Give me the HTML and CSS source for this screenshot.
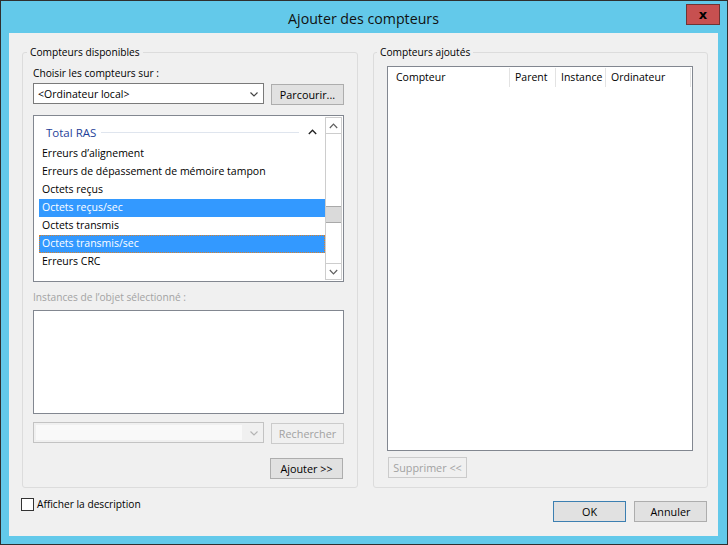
FILE: index.html
```html
<!DOCTYPE html>
<html lang="fr">
<head>
<meta charset="utf-8">
<title>Ajouter des compteurs</title>
<link rel="stylesheet" href="styles.css">
</head>
<body>
<div class="window">
  <div class="titlebar">
    <div class="title">Ajouter des compteurs</div>
    <button class="close" type="button">x</button>
  </div>
  <div class="client">
    <div class="groups">
      <fieldset class="group group-left">
        <legend>Compteurs disponibles</legend>
        <div class="label">Choisir les compteurs sur :</div>
        <div class="row">
          <div class="combo">
            <span class="combo-text">&lt;Ordinateur local&gt;</span>
            <svg class="chev" width="8" height="5" viewBox="0 0 8 5"><polyline points="0.5,0.5 4,4 7.5,0.5" fill="none" stroke="#444" stroke-width="1.2"/></svg>
          </div>
          <button class="btn btn-offset" type="button">Parcourir...</button>
        </div>
        <div class="listbox">
          <div class="items">
            <div class="cat">
              <span class="cat-name">Total RAS</span>
              <span class="cat-line"></span>
              <svg class="cat-chev" width="9" height="6" viewBox="0 0 9 6"><polyline points="0.8,5 4.5,1.2 8.2,5" fill="none" stroke="#222" stroke-width="1.3"/></svg>
            </div>
            <div class="item">Erreurs d’alignement</div>
            <div class="item">Erreurs de dépassement de mémoire tampon</div>
            <div class="item">Octets reçus</div>
            <div class="item sel">Octets reçus/sec</div>
            <div class="item">Octets transmis</div>
            <div class="item sel focus">Octets transmis/sec</div>
            <div class="item">Erreurs CRC</div>
          </div>
          <div class="scrollbar">
            <div class="sb-btn sb-up"><svg width="9" height="6" viewBox="0 0 9 6"><polyline points="0.8,5 4.5,1.2 8.2,5" fill="none" stroke="#606060" stroke-width="1.2"/></svg></div>
            <div class="sb-track"><div class="sb-thumb"></div></div>
            <div class="sb-btn sb-down"><svg width="9" height="6" viewBox="0 0 9 6"><polyline points="0.8,1 4.5,4.8 8.2,1" fill="none" stroke="#606060" stroke-width="1.2"/></svg></div>
          </div>
        </div>
        <div class="label label-disabled">Instances de l’objet sélectionné :</div>
        <div class="instances"></div>
        <div class="row row-search">
          <div class="combo combo-disabled">
            <span class="combo-inner"></span>
            <svg class="chev" width="8" height="5" viewBox="0 0 8 5"><polyline points="0.5,0.5 4,4 7.5,0.5" fill="none" stroke="#b4b4b4" stroke-width="1.2"/></svg>
          </div>
          <button class="btn btn-disabled btn-offset" type="button">Rechercher</button>
        </div>
        <div class="row row-add">
          <button class="btn" type="button">Ajouter &gt;&gt;</button>
        </div>
      </fieldset>
      <fieldset class="group group-right">
        <legend>Compteurs ajoutés</legend>
        <div class="listview">
          <div class="lv-header">
            <div class="lv-col col-1">Compteur</div>
            <div class="lv-col col-2">Parent</div>
            <div class="lv-col col-3">Instance</div>
            <div class="lv-col col-4">Ordinateur</div>
          </div>
        </div>
        <div class="row row-remove">
          <button class="btn btn-disabled btn-remove" type="button">Supprimer &lt;&lt;</button>
        </div>
      </fieldset>
    </div>
    <div class="footer">
      <label class="check">
        <span class="box"></span>
        <span class="check-label">Afficher la description</span>
      </label>
      <div class="actions">
        <button class="btn btn-default" type="button">OK</button>
        <button class="btn" type="button">Annuler</button>
      </div>
    </div>
  </div>
</div>
</body>
</html>
```

FILE: styles.css
```css
* {
  box-sizing: border-box;
}

html,
body {
  margin: 0;
  padding: 0;
}

body {
  width: 728px;
  height: 545px;
  font-family: "Open Sans", "Noto Sans", sans-serif;
  font-size: 10.2px;
  color: #000;
  background: #fff;
  overflow: hidden;
}

.window {
  width: 728px;
  height: 545px;
  border: 1px solid #2f2f2f;
  background: #63c9ea;
  padding: 0 9px 8px 8px;
  display: flex;
  flex-direction: column;
}

.titlebar {
  height: 32px;
  flex: none;
  display: grid;
  grid-template-columns: 1fr auto 1fr;
  align-items: start;
}

.title {
  grid-column: 2;
  font-size: 14.2px;
  line-height: 18px;
  margin-top: 9px;
  color: #111;
}

.close {
  grid-column: 3;
  justify-self: end;
  margin-top: 3px;
  margin-right: -2px;
  width: 34px;
  height: 21px;
  border: 1px solid #6e3434;
  background: #c75050;
  color: #000;
  font-family: "DejaVu Sans", sans-serif;
  font-weight: bold;
  font-size: 13px;
  line-height: 16px;
  padding: 0;
}

.client {
  flex: 1;
  background: #f0f0f0;
  padding: 12px 10px 0 13px;
  display: flex;
  flex-direction: column;
}

.groups {
  display: flex;
  gap: 15px;
}

.group {
  margin: 0;
  border: 1px solid #dcdcdc;
  border-radius: 3px;
  display: flex;
  flex-direction: column;
  min-width: 0;
}

.group legend {
  line-height: 14px;
  font-size: 10.2px;
  padding: 0 3px;
}

.group-left {
  width: 336px;
  padding: 7px 13px 7px 10px;
}

.group-left legend {
  margin-left: -6px;
}

.group-right {
  width: 335px;
  padding: 7px 14px 8px 13px;
}

.group-right legend {
  margin-left: -10px;
}

.label {
  line-height: 14px;
  white-space: nowrap;
}

.label-disabled {
  color: #a3a3a3;
  margin-top: 8px;
}

.row {
  display: flex;
  align-items: flex-start;
  gap: 7px;
  margin-top: 3px;
  height: 22px;
}

.combo {
  width: 231px;
  height: 21px;
  border: 1px solid #7a7a7a;
  background: #fff;
  display: flex;
  align-items: center;
  padding: 0 5px 0 4px;
}

.combo-text {
  flex: 1;
  font-size: 10.5px;
  white-space: nowrap;
}

.chev {
  flex: none;
  margin-top: 1px;
}

.combo-disabled {
  border-color: #c3c3c3;
  background: #f0f0f0;
  padding: 2px 5px 2px 2px;
}

.combo-inner {
  flex: 1;
  align-self: stretch;
  background: #f9f9f9;
  margin-right: 8px;
}

.btn {
  width: 73px;
  height: 21px;
  border: 1px solid #adadad;
  background: #e1e1e1;
  font-family: inherit;
  font-size: 10.8px;
  color: #000;
  padding: 0;
  line-height: 18px;
  white-space: nowrap;
}

.btn-offset {
  margin-top: 1px;
}

.btn-disabled {
  background: #f0f0f0;
  border-color: #cbcbcb;
  color: #a2a2a2;
}

.btn-default {
  border-color: #3c7fb1;
}

.listbox {
  margin-top: 10px;
  width: 311px;
  height: 167px;
  border: 1px solid #828790;
  background: #fff;
  display: flex;
  padding: 1px 1px 1px 0;
}

.items {
  flex: 1;
  padding-top: 6px;
  font-size: 10.5px;
}

.cat {
  height: 18px;
  display: flex;
  align-items: center;
  padding-left: 12px;
  margin-bottom: 4px;
}

.cat-name {
  color: #1f3f99;
  font-size: 11.5px;
  white-space: nowrap;
}

.cat-line {
  flex: none;
  width: 198px;
  height: 1px;
  background: #dfe5ee;
  margin-left: 5px;
}

.cat-chev {
  margin-left: 9px;
}

.item {
  height: 18px;
  line-height: 17px;
  margin-left: 5px;
  padding-left: 3px;
  white-space: nowrap;
}

.item.sel {
  background: #3399ff;
  color: #fff;
}

.item.focus {
  border: 1px dotted #d9812c;
  padding-left: 2px;
  line-height: 15px;
}

.scrollbar {
  width: 17px;
  flex: none;
  border: 1px solid #cdcdcd;
  display: flex;
  flex-direction: column;
  background: #fff;
}

.sb-btn {
  height: 16px;
  flex: none;
  display: flex;
  align-items: center;
  justify-content: center;
}

.sb-up {
  border-bottom: 1px solid #cdcdcd;
}

.sb-down {
  border-top: 1px solid #cdcdcd;
}

.sb-track {
  flex: 1;
}

.sb-thumb {
  margin-top: 72px;
  height: 17px;
  background: #dadada;
  border-top: 1px solid #a9a9a9;
  border-bottom: 1px solid #a9a9a9;
}

.instances {
  margin-top: 6px;
  width: 311px;
  height: 104px;
  border: 1px solid #828790;
  background: #fff;
}

.row-search {
  margin-top: 8px;
}

.row-add {
  margin-top: 14px;
  justify-content: flex-end;
  padding-right: 1px;
}

.listview {
  flex: 1;
  width: 306px;
  border: 1px solid #828790;
  background: #fff;
  padding: 1px;
}

.lv-header {
  display: flex;
  height: 19px;
  font-size: 10.5px;
}

.lv-col {
  border-right: 1px solid #e3e3e3;
  padding-left: 7px;
  line-height: 19px;
  white-space: nowrap;
}

.col-1 {
  width: 121px;
}

.col-2 {
  width: 46px;
  padding-left: 5px;
}

.col-3 {
  width: 50px;
  padding-left: 5px;
}

.col-4 {
  width: 85px;
  padding-left: 5px;
}

.row-remove {
  margin-top: 6px;
  padding-left: 1px;
}

.btn-remove {
  width: 79px;
}

.footer {
  display: flex;
  justify-content: space-between;
  align-items: flex-start;
  padding-top: 10px;
  padding-right: 1px;
}

.check {
  display: flex;
  align-items: center;
  gap: 3px;
  margin-left: -1px;
}

.box {
  width: 13px;
  height: 13px;
  border: 1px solid #333;
  background: #fff;
}

.check-label {
  line-height: 13px;
}

.actions {
  display: flex;
  gap: 8px;
  margin-top: 3px;
}
```
